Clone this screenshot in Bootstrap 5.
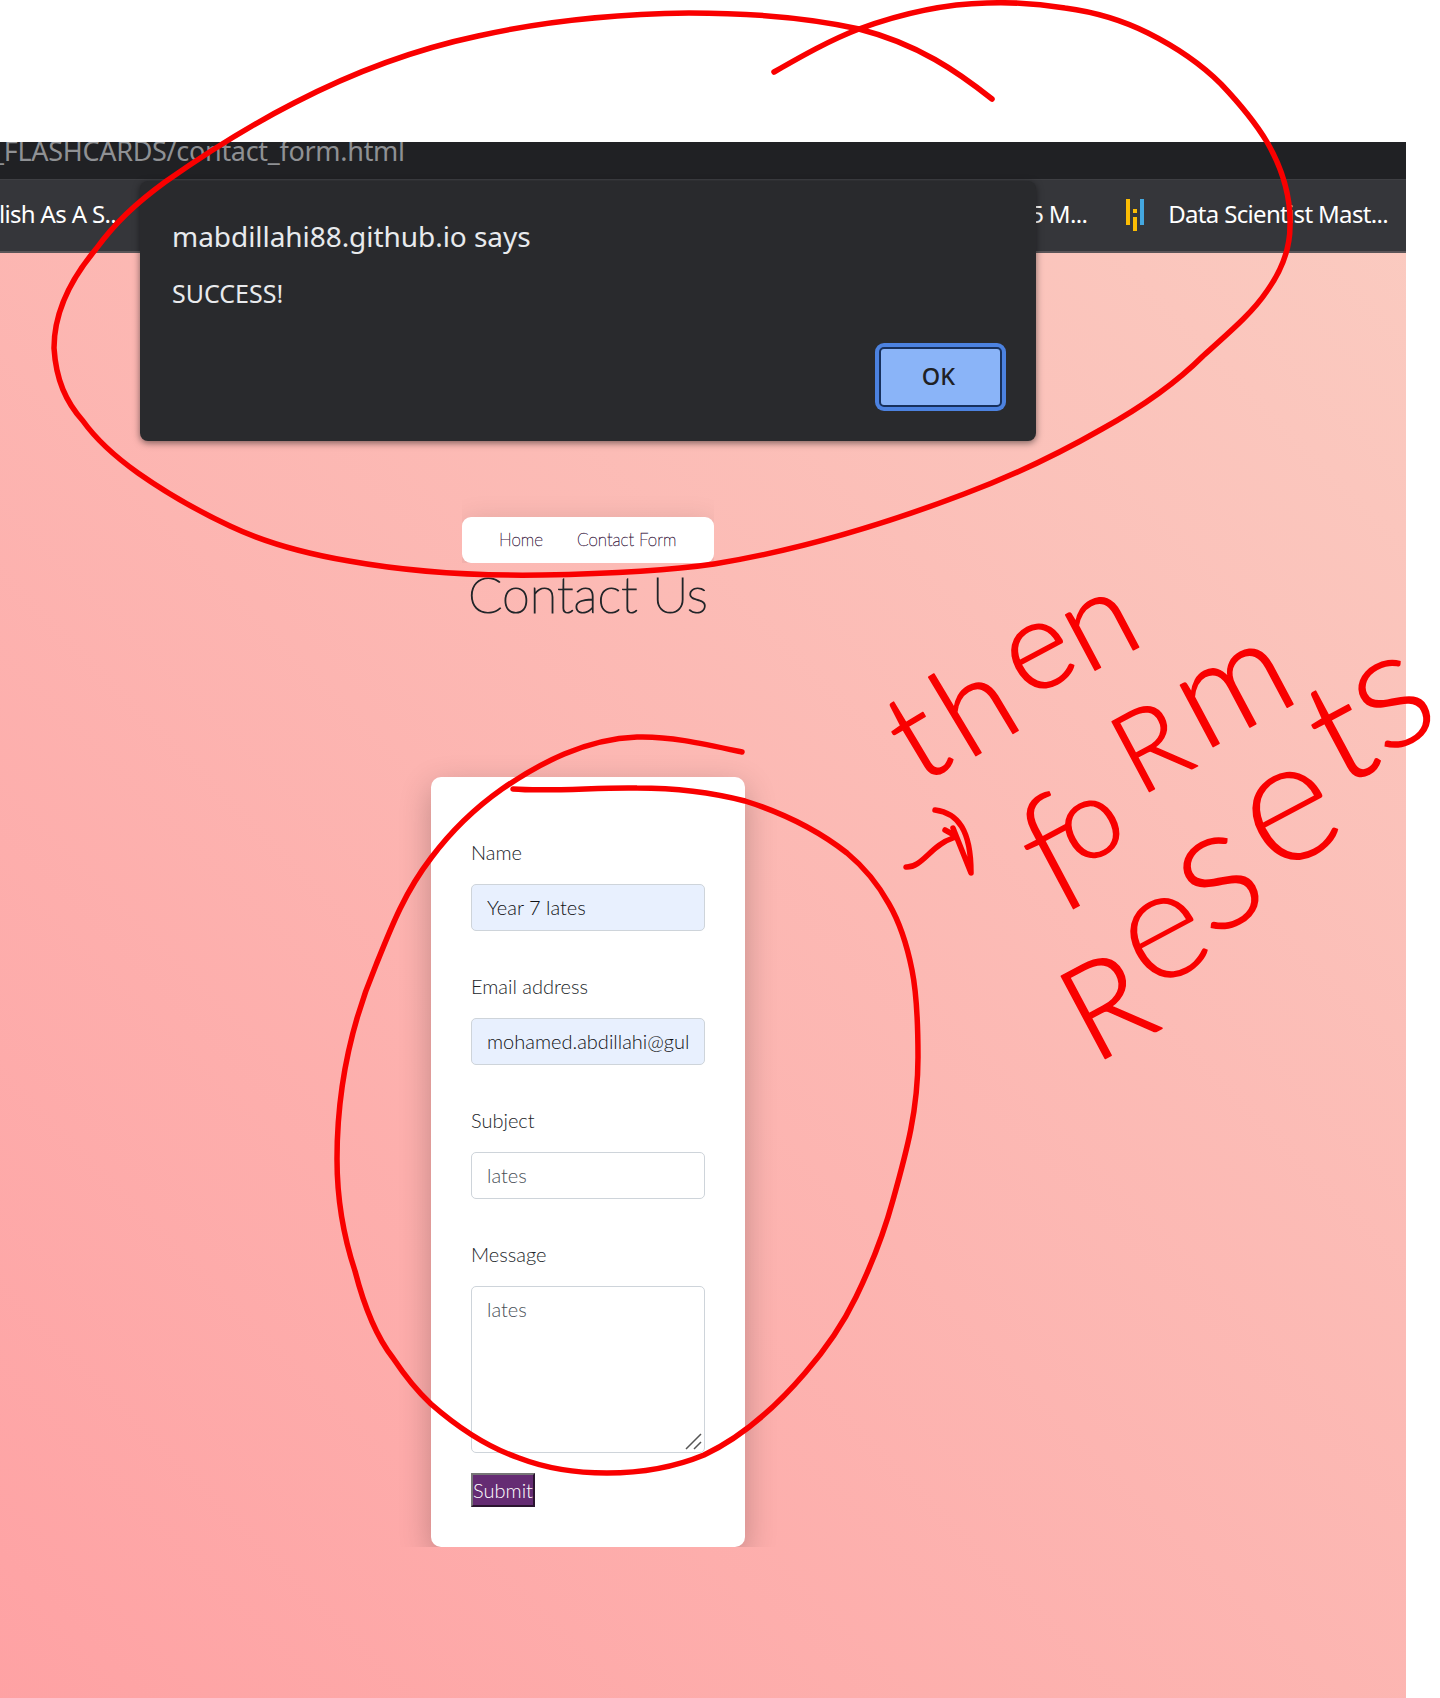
<!DOCTYPE html>
<html lang="en">
<head>
<meta charset="utf-8">
<meta name="viewport" content="width=device-width, initial-scale=1">
<title>Contact Us</title>
<link href="https://cdn.jsdelivr.net/npm/bootstrap@5.3.0/dist/css/bootstrap.min.css" rel="stylesheet">
<style>
  body { width: 1440px; height: 1698px; padding-top: 142px; font-family: Lato, "Noto Sans", sans-serif; font-weight: 300; overflow: hidden; color: #212529; }
  .browser { width: 1406px; height: 1556px; }
  .chrome-text { font-family: "Noto Sans", "Open Sans", sans-serif; font-weight: 400; white-space: nowrap; }
  .address { height: 37px; background: #202124; color: #8f9194; font-size: 27px; line-height: 37px; }
  .address span { display: block; margin: -10px 0 0 -8px; letter-spacing: -.3px; }
  .bookmarks { height: 74px; background: #35363a; border-top: 1px solid #3e3f43; border-bottom: 2px solid #5b5558; color: #fff; font-size: 24px; letter-spacing: -.67px; padding-bottom: 3px; }
  .bm-left { margin-left: -1px; }
  .bm-right { padding-right: 18px; }
  .bm-icon { margin: 1px 22px 0 39px; }
  .page-bg { background: linear-gradient(45deg, #ff9a9e -20%, #fad0c4 115%); }
  .page-col { width: 1176px; padding-top: 264px; }
  .site-nav { width: 252px; height: 46px; border-radius: 9px; box-shadow: 0 4px 28px rgba(0,0,0,.13); clip-path: inset(-40px 0 0 0); padding-left: 37px; gap: 34px; font-weight: 100; }
  .site-nav a { color: #3a2042; font-size: 17px; text-decoration: none; -webkit-text-stroke: .45px #3a2042; }
  .page-title { font-size: 50.5px; font-weight: 100; line-height: 60px; margin: 1px 0 153px; -webkit-text-stroke: 1.2px #212529; }
  .form-panel { width: 314px; height: 770px; border-radius: 10px; padding: 59px 40px 40px; box-shadow: 0 10px 32px rgba(0,0,0,.24); clip-path: inset(-50px -50px 0 -50px); font-size: 20px; }
  .field { height: 134px; }
  .form-panel label { display: block; line-height: 32px; margin-bottom: 16px; }
  .form-panel .form-control { font: 300 20px/30px Lato, sans-serif; height: 47px; padding: 6px 15px 8px; border: 1px solid #ced4da; border-radius: 5px; color: #495057; }
  .form-panel .autofilled { background: #e8f0fe; color: #101114; }
  .form-panel textarea.form-control { height: 167px; padding-top: 7px; resize: none; }
  .grip { right: 2px; bottom: 2px; }
  .send { width: 64px; height: 34px; padding: 0; margin-top: 20px; background: #652c73; border: 2px solid; border-color: #777 #2b1530 #2b1530 #777; color: #fff; font-weight: 300; font-size: 20px; line-height: 28px; }
  .alert-box { left: 140px; top: 181px; width: 896px; height: 260px; border-radius: 8px; background: #292a2d; color: #e8eaed; padding: 34px 32px 32px; box-shadow: 0 2px 7px rgba(0,0,0,.5); }
  .alert-title { font-size: 28px; line-height: 42px; letter-spacing: -.05px; }
  .alert-msg { font-size: 25px; line-height: 36px; margin-top: 18px; }
  .ok-btn { width: 123px; height: 60px; margin-top: 36px; margin-right: 2px; padding: 0 4px 1px 0; border-radius: 5px; background: #8ab4f8; border: 2px solid #17305c; box-shadow: 0 0 0 4px #4c82e0; color: #202124; font-size: 23.5px; font-weight: 500; }
  .ink { left: 0; top: 0; }
  .ink path { fill: none; stroke: #f90000; stroke-width: 5.5; stroke-linecap: round; stroke-linejoin: round; }
  .ink text { font-family: Lato, sans-serif; font-weight: 300; fill: #f90000; stroke: #f90000; stroke-width: 1.5; stroke-linejoin: round; }
</style>
</head>
<body class="position-relative bg-white">
<div class="browser d-flex flex-column">
  <div class="address chrome-text overflow-hidden"><span>_FLASHCARDS/contact_form.html</span></div>
  <div class="bookmarks chrome-text d-flex align-items-center justify-content-between overflow-hidden">
    <span class="bm-left">lish As A S...</span>
    <div class="bm-right d-flex align-items-center">
      <span class="bm-mid">5 M...</span>
      <svg class="bm-icon" width="20" height="34" viewBox="0 0 20 34"><path fill="#fbbc04" d="M0 1h4v26H0zM7 11h4v4H7zM7 19h4v14H7z"/><path fill="#44a8e0" d="M14 1h4v26h-4z"/></svg>
      <span class="bm-last">Data Scientist Mast...</span>
    </div>
  </div>
  <main class="page-bg flex-grow-1">
    <div class="page-col d-flex flex-column align-items-center">
      <nav class="site-nav bg-white d-flex align-items-center"><a href="#">Home</a><a href="#">Contact Form</a></nav>
      <h1 class="page-title">Contact Us</h1>
      <form class="form-panel bg-white">
        <div class="field"><label for="name">Name</label><input id="name" class="form-control autofilled" value="Year 7 lates"></div>
        <div class="field"><label for="email">Email address</label><input id="email" class="form-control autofilled" value="mohamed.abdillahi@gulf"></div>
        <div class="field"><label for="subject">Subject</label><input id="subject" class="form-control" value="lates"></div>
        <div class="position-relative"><label for="msg">Message</label><textarea id="msg" class="form-control">lates</textarea>
          <svg class="grip position-absolute" width="18" height="18" viewBox="0 0 18 18" stroke="#555" stroke-width="1.5"><path d="M1 16 16 1M9 16l7-7"/></svg></div>
        <button type="button" class="send">Submit</button>
      </form>
    </div>
  </main>
</div>
<div class="alert-box chrome-text position-absolute d-flex flex-column">
  <div class="alert-title"><span>mabdillahi88.github.io says</span></div>
  <div class="alert-msg"><span>SUCCESS!</span></div>
  <button type="button" class="ok-btn align-self-end">OK</button>
</div>
<svg class="ink position-absolute" width="1440" height="1698" viewBox="0 0 1440 1698">
  <path d="M992 99C958 72 918 44 859 29C805 17 745 13 689 13C615 14 540 22 478 36C412 50 350 74 294 103C245 128 205 154 165 182C135 204 115 223 96 249C70 280 54 312 54 348C56 380 66 402 83 421C98 442 117 458 138 473C165 492 198 511 230 526C268 544 308 554 349 561C410 572 475 576 542 575C600 574 660 572 714 564C800 550 885 524 964 494C1015 475 1060 453 1102 429C1140 408 1175 384 1203 356C1232 330 1253 312 1267 291C1282 270 1290 250 1290 226C1291 195 1282 168 1267 142C1255 122 1240 104 1221 84C1200 63 1176 47 1148 33C1120 19 1095 12 1065 8C1040 4 1013 2 987 3C940 4 900 14 859 29C830 40 802 56 774 72"/>
  <path d="M742 752C700 743 668 736 637 737C585 739 540 763 502 789C475 808 452 830 431 858C405 892 392 925 376 965C352 1022 337 1085 337 1159C337 1200 343 1235 355 1271C363 1302 375 1335 393 1358C405 1376 416 1390 431 1404C455 1425 487 1447 519 1458C545 1468 575 1473 607 1473C645 1473 675 1467 704 1455C740 1438 775 1408 805 1373C825 1350 842 1326 856 1297C872 1264 884 1233 893 1200C907 1150 918 1110 918 1057C918 1025 917 995 912 970C907 945 900 923 889 904C878 884 865 868 847 853C815 828 780 812 745 801C710 792 675 788 637 788C600 787 550 792 513 789"/>
  <path d="M906 867C922 868 931 845 953 838M935 810C958 813 971 830 971 873L953 828M945 830L954 835"/>
  <g>
    <text x="920 967 1026 1086" y="785 761 700 675" rotate="-31 -31 -28 -28" font-size="126">then</text>
    <text rotate="-28"><tspan x="1057" y="918" font-size="164" stroke-width="0">f</tspan><tspan x="1078" y="868" font-size="110">o</tspan><tspan x="1139" y="797" font-size="112">R</tspan><tspan x="1203" y="752" font-size="140">m</tspan></text>
    <text rotate="-28"><tspan x="1093" y="1065" font-size="132">R</tspan><tspan x="1148" y="993" font-size="158" stroke-width="0">e</tspan><tspan x="1208" y="940" font-size="178" stroke-width="0">s</tspan><tspan x="1272" y="877" font-size="175" stroke-width="0">e</tspan><tspan x="1341" y="788" font-size="145">t</tspan><tspan x="1382" y="758" font-size="170" stroke-width="0">s</tspan></text>
  </g>
</svg>
<script src="https://cdn.jsdelivr.net/npm/bootstrap@5.3.0/dist/js/bootstrap.bundle.min.js"></script>
</body>
</html>
